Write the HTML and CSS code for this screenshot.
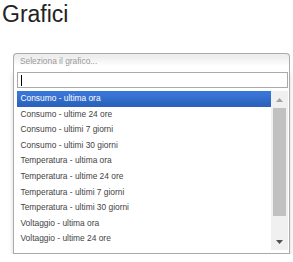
FILE: index.html
```html
<!DOCTYPE html>
<html lang="it">
<head>
<meta charset="utf-8">
<title>Grafici</title>
<link rel="stylesheet" href="styles.css">
</head>
<body>
<h1 class="title">Grafici</h1>
<div class="chosen">
  <div class="chosen-single"><span class="placeholder">Seleziona il grafico...</span></div>
  <div class="chosen-drop">
    <div class="chosen-search">
      <div class="search-input"><span class="caret"></span></div>
    </div>
    <div class="results">
      <ul class="results-list">
        <li class="item highlighted">Consumo - ultima ora</li>
        <li class="item">Consumo - ultime 24 ore</li>
        <li class="item">Consumo - ultimi 7 giorni</li>
        <li class="item">Consumo - ultimi 30 giorni</li>
        <li class="item">Temperatura - ultima ora</li>
        <li class="item">Temperatura - ultime 24 ore</li>
        <li class="item">Temperatura - ultimi 7 giorni</li>
        <li class="item">Temperatura - ultimi 30 giorni</li>
        <li class="item">Voltaggio - ultima ora</li>
        <li class="item">Voltaggio - ultime 24 ore</li>
      </ul>
      <div class="scrollbar">
        <div class="sb-button"><svg width="7" height="4" viewBox="0 0 7 4"><path d="M0 4 L3.5 0 L7 4 Z" fill="#a3a3a3"/></svg></div>
        <div class="sb-track"><div class="sb-thumb"></div></div>
        <div class="sb-button"><svg width="7" height="4" viewBox="0 0 7 4"><path d="M0 0 L7 0 L3.5 4 Z" fill="#505050"/></svg></div>
      </div>
    </div>
  </div>
</div>
</body>
</html>
```

FILE: styles.css
```css
* { box-sizing: border-box; }
html, body { margin: 0; padding: 0; background: #fff; }
body { font-family: "Liberation Sans", Arial, sans-serif; color: #333; }

.title {
  margin: 0;
  padding-left: 2px;
  font-size: 23px;
  line-height: 28px;
  font-weight: normal;
  color: #222;
}

.chosen {
  width: 277px;
  margin: 25px 0 0 13px;
  font-size: 8.4px;
}

.chosen-single {
  height: 16px;
  border: 1px solid #aaa;
  border-bottom: 0;
  border-radius: 4px 4px 0 0;
  background: linear-gradient(#eee 20%, #fff 80%);
  padding-left: 6px;
  line-height: 15px;
}
.placeholder { color: #999; }

.chosen-drop {
  border: 1px solid #aaa;
  border-top: 0;
  background: #fff;
  box-shadow: 0 4px 5px rgba(0,0,0,.15);
}

.chosen-search { padding: 3px 1px 3px 3px; }
.search-input {
  height: 16px;
  border: 1px solid #aaa;
  background: #fff;
  display: flex;
  align-items: center;
  padding-left: 3px;
}
.caret { width: 1px; height: 11px; background: #000; }

.results {
  display: flex;
  height: 159px;
  margin: 0 1px 3px 3px;
}
.results-list {
  flex: 1;
  margin: 0;
  padding: 0;
  list-style: none;
  overflow: hidden;
}
.item {
  height: 15.6px;
  line-height: 15.6px;
  padding: 0 3.5px;
  color: #444;
  white-space: nowrap;
}
.item.highlighted {
  color: #fff;
  background: #3875d7 linear-gradient(#3875d7 20%, #2a62bc 90%);
}

.scrollbar {
  width: 17px;
  background: #f0f0f0;
  display: flex;
  flex-direction: column;
}
.sb-button {
  height: 17px;
  display: flex;
  align-items: center;
  justify-content: center;
}
.sb-button svg { display: block; }
.sb-track { flex: 1; padding: 0 2px; }
.sb-thumb {
  height: 108px;
  background: #c1c1c1;
}
```
